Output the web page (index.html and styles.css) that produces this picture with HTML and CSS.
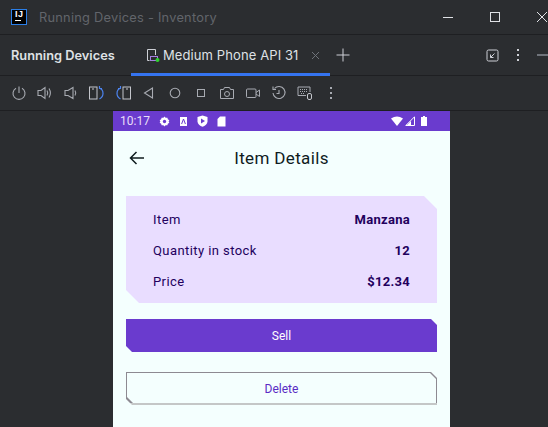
FILE: index.html
```html
<!DOCTYPE html>
<html lang="en">
<head>
    <meta charset="UTF-8">
    <meta name="viewport" content="width=device-width, initial-scale=1.0">
    <title>Running Devices - Inventory</title>
    <link rel="stylesheet" href="styles.css">
</head>
<body>
    <header class="titlebar">
        <div class="logo"><span class="logo-text">IJ</span><span class="logo-bar"></span></div>
        <span class="window-title">Running Devices - Inventory</span>
        <div class="window-buttons">
            <svg width="12" height="12" viewBox="0 0 12 12"><path d="M1 6.5H11" stroke="#dfe1e5" fill="none"/></svg>
            <svg width="12" height="12" viewBox="0 0 12 12"><rect x="1.5" y="1.5" width="9" height="9" stroke="#dfe1e5" fill="none"/></svg>
            <svg width="12" height="12" viewBox="0 0 12 12"><path d="M1 1L11 11M11 1L1 11" stroke="#dfe1e5" fill="none"/></svg>
        </div>
    </header>

    <nav class="tabbar">
        <span class="tool-name">Running Devices</span>
        <div class="tab">
            <svg width="14" height="14" viewBox="0 0 14 14">
                <path d="M9.5 7V1.5H1.5V12.5H3.5" stroke="#ced0d6" fill="none"/>
                <path d="M4 1.5H5.5" stroke="#ced0d6" fill="none"/>
                <rect x="4.5" y="8.5" width="7" height="4" stroke="#a57fe0" fill="none"/>
                <circle cx="11.5" cy="12" r="2" fill="#2fd02f"/>
            </svg>
            <span class="tab-label">Medium Phone API 31</span>
            <svg class="tab-close" width="9" height="9" viewBox="0 0 9 9"><path d="M1 1L8 8M8 1L1 8" stroke="#6f737a" fill="none"/></svg>
        </div>
        <svg class="tab-add" width="14" height="14" viewBox="0 0 14 14"><path d="M7 0.5V13.5M0.5 7H13.5" stroke="#ced0d6" fill="none"/></svg>
        <div class="tab-actions">
            <svg width="13" height="13" viewBox="0 0 13 13"><rect x="1" y="1" width="11" height="11" rx="1.5" stroke="#ced0d6" fill="none"/><path d="M8.5 4.5L4.5 8.5M4.5 5.5V8.5H7.5" stroke="#ced0d6" fill="none"/></svg>
            <svg width="4" height="14" viewBox="0 0 4 14"><path d="M1 1h2v2H1zM1 6h2v2H1zM1 11h2v2H1z" fill="#ced0d6"/></svg>
            <span class="minimize"></span>
        </div>
    </nav>

    <div class="toolbar">
        <svg width="16" height="16" viewBox="0 0 16 16"><path d="M5 3.2A6 6 0 1 0 11 3.2M8 1.5V8" stroke="#a8abb2" stroke-width="1.1" fill="none"/></svg>
        <svg width="16" height="16" viewBox="0 0 16 16"><path d="M1 5.5H4L8 2.5V13.5L4 10.5H1Z M10 5.5Q11.5 8 10 10.5M12 3.5Q14.8 8 12 12.5" stroke="#a8abb2" stroke-width="1.1" fill="none"/></svg>
        <svg width="16" height="16" viewBox="0 0 16 16"><path d="M2 5.5H5L10 2.5V13.5L5 10.5H2Z M12 5.5Q13.5 8 12 10.5" stroke="#a8abb2" stroke-width="1.1" fill="none"/></svg>
        <svg width="16" height="16" viewBox="0 0 16 16"><rect x="0.5" y="2" width="7.5" height="12" stroke="#c4c6cc" fill="none"/><path d="M3 4H5" stroke="#c4c6cc" fill="none"/><path d="M10 3Q14 4 14 8.5Q14 12 10.5 14M10.5 1V3.5H13" stroke="#4c84f0" stroke-width="1.2" fill="none"/></svg>
        <svg width="16" height="16" viewBox="0 0 16 16"><rect x="8" y="2" width="7.5" height="12" stroke="#c4c6cc" fill="none"/><path d="M11 4H13" stroke="#c4c6cc" fill="none"/><path d="M6 3Q2 4 2 8.5Q2 12 5.5 14M5.5 1V3.5H3" stroke="#4c84f0" stroke-width="1.2" fill="none"/></svg>
        <svg width="16" height="16" viewBox="0 0 16 16"><path d="M11.5 3V13L3.5 8Z" stroke="#a8abb2" stroke-width="1.1" fill="none"/></svg>
        <svg width="16" height="16" viewBox="0 0 16 16"><circle cx="8" cy="8" r="4.8" stroke="#a8abb2" stroke-width="1.1" fill="none"/></svg>
        <svg width="16" height="16" viewBox="0 0 16 16"><rect x="4.5" y="4.5" width="7" height="7" stroke="#a8abb2" fill="none"/></svg>
        <svg width="16" height="16" viewBox="0 0 16 16"><path d="M1.5 4.5H4.5L5.5 2.5H10.5L11.5 4.5H14.5V13.5H1.5Z" stroke="#a8abb2" fill="none"/><circle cx="8" cy="9" r="2.5" stroke="#a8abb2" fill="none"/></svg>
        <svg width="16" height="16" viewBox="0 0 16 16"><rect x="1.5" y="4" width="9.5" height="8.5" rx="1" stroke="#a8abb2" fill="none"/><path d="M11 7.5L14.5 5V11.5L11 9" stroke="#a8abb2" fill="none"/></svg>
        <svg width="16" height="16" viewBox="0 0 16 16"><path d="M3.5 3.5A6 6 0 1 1 2 8M2 1.5V4.5H5M8 5V8.5H5.5" stroke="#a8abb2" stroke-width="1.1" fill="none"/></svg>
        <svg width="16" height="16" viewBox="0 0 16 16"><path d="M9 10.5H1V2H13V7" stroke="#a8abb2" fill="none"/><path d="M3 4.5h8M3 6.5h8M4 8.5h4" stroke="#a8abb2" stroke-dasharray="1 1" fill="none"/><rect x="10.5" y="8.5" width="4" height="6" rx="1.5" stroke="#c4c6cc" fill="none"/></svg>
        <svg width="16" height="16" viewBox="0 0 16 16"><path d="M7 2h2v2H7zM7 7h2v2H7zM7 12h2v2H7z" fill="#a8abb2"/></svg>
    </div>

    <main class="device-area">
        <div class="phone">
            <div class="statusbar">
                <span class="clock">10:17</span>
                <svg width="11" height="11" viewBox="0 0 12 12"><path d="M6 0.5L7.2 2L9.2 1.8L9.6 3.6L11.3 4.6L10.5 6L11.3 7.4L9.6 8.4L9.2 10.2L7.2 10L6 11.5L4.8 10L2.8 10.2L2.4 8.4L.7 7.4L1.5 6L.7 4.6L2.4 3.6L2.8 1.8L4.8 2Z" fill="#fff"/><circle cx="6" cy="6" r="1.8" fill="#6a3bce"/></svg>
                <svg width="9" height="11" viewBox="0 0 9 11"><path d="M1 1H8V10H1Z" fill="#fff"/><path d="M2.6 8L4.5 3L6.4 8" stroke="#6a3bce" fill="none"/></svg>
                <svg width="11" height="12" viewBox="0 0 11 12"><path d="M5.5 0.5L10.5 2V6.5C10.5 9 8 11 5.5 11.8C3 11 0.5 9 0.5 6.5V2Z" fill="#fff"/><path d="M4 3.5V8.5L8 6Z" fill="#6a3bce"/></svg>
                <svg width="9" height="11" viewBox="0 0 9 11"><path d="M3 0.5H8.5V10.5H0.5V3Z" fill="#fff"/></svg>
                <div class="status-right">
                    <svg width="12" height="10" viewBox="0 0 12 10"><path d="M0 2.5Q6 -1.5 12 2.5L6 10Z" fill="#fff"/></svg>
                    <svg width="10" height="10" viewBox="0 0 10 10"><path d="M9.5 0.8V9.5H0.8Z" stroke="#fff" fill="none"/><path d="M6 5V9.5H1.5Z" fill="#fff"/></svg>
                    <svg class="battery" width="6" height="10" viewBox="0 0 6 10"><path d="M2 0H4V1H6V10H0V1H2Z" fill="#fff"/></svg>
                </div>
            </div>
            <div class="appbar">
                <svg class="back" width="16" height="14" viewBox="0 0 16 14"><path d="M15 7H2M7.5 1L1.5 7L7.5 13" stroke="#0f1c1e" stroke-width="1.5" fill="none"/></svg>
                <h1 class="app-title">Item Details</h1>
            </div>
            <div class="content">
                <section class="details">
                    <div class="detail-row"><span>Item</span><strong>Manzana</strong></div>
                    <div class="detail-row"><span>Quantity in stock</span><strong>12</strong></div>
                    <div class="detail-row"><span>Price</span><strong>$12.34</strong></div>
                </section>
                <button type="button" class="btn-sell">Sell</button>
                <div class="btn-outline"><button type="button" class="btn-delete">Delete</button></div>
            </div>
        </div>
    </main>
</body>
</html>
```

FILE: styles.css
```css
html, body {
    height: 100%;
}

body {
    margin: 0;
    width: 548px;
    height: 427px;
    overflow: hidden;
    display: flex;
    flex-direction: column;
    background-color: #2b2d30;
    font-family: Inter, "Noto Sans", sans-serif;
}

svg {
    display: block;
    flex: none;
}

.titlebar {
    height: 34px;
    flex: none;
    display: flex;
    align-items: center;
    padding-left: 11px;
    border-bottom: 1px solid #1e1f22;
}

.logo {
    width: 14px;
    height: 14px;
    background: #000;
    border: 1px solid #2b7fe8;
    display: flex;
    flex-direction: column;
    overflow: hidden;
}

.logo-text {
    color: #fff;
    font-family: "Liberation Sans", sans-serif;
    font-size: 9px;
    font-weight: 700;
    line-height: 9px;
    padding-left: 3px;
    letter-spacing: 0.5px;
}

.logo-bar {
    width: 6px;
    height: 1px;
    margin: 1px 0 0 3px;
    background: #fff;
}

.window-title {
    margin-left: 12px;
    color: #62656b;
    font-size: 12.8px;
    letter-spacing: 0.25px;
}

.window-buttons {
    margin-left: auto;
    display: flex;
    gap: 35px;
}

.tabbar {
    height: 40px;
    flex: none;
    display: flex;
    align-items: center;
    padding-left: 11px;
    border-bottom: 1px solid #1e1f22;
}

.tool-name {
    width: 120px;
    color: #dfe1e5;
    font-size: 12.8px;
    font-weight: 600;
}

.tab {
    align-self: stretch;
    width: 199px;
    box-sizing: border-box;
    padding: 2px 0 0 15px;
    display: flex;
    align-items: center;
    border-bottom: 3px solid #3574f0;
    margin-bottom: -1px;
}

.tab-label {
    margin-left: 3px;
    color: #dfe1e5;
    font-size: 13px;
    letter-spacing: 0.1px;
    white-space: nowrap;
}

.tab-close {
    margin-left: 12px;
}

.tab-add {
    margin-left: 6px;
}

.tab-actions {
    margin-left: auto;
    display: flex;
    align-items: center;
    gap: 17px;
}

.minimize {
    width: 11px;
    height: 2px;
    background: #6f737a;
}

.toolbar {
    height: 34px;
    flex: none;
    display: flex;
    align-items: center;
    gap: 10px;
    padding-left: 11px;
    border-bottom: 1px solid #1e1f22;
}

.device-area {
    flex: 1;
    min-height: 0;
    padding-left: 113px;
}

.phone {
    width: 337px;
    height: 100%;
    background-color: #f4fffe;
    display: flex;
    flex-direction: column;
}

.statusbar {
    height: 20px;
    flex: none;
    display: flex;
    align-items: center;
    gap: 9px;
    padding: 0 23px 0 7px;
    background-color: #6a3bce;
}

.clock {
    color: #e8def8;
    font-family: Roboto, sans-serif;
    font-size: 12px;
}

.status-right {
    margin-left: auto;
    display: flex;
    align-items: center;
    gap: 2px;
}

.battery {
    margin-left: 4px;
}

.appbar {
    height: 54px;
    flex: none;
    display: flex;
    align-items: center;
    position: relative;
    justify-content: center;
}

.back {
    position: absolute;
    left: 16px;
    top: 20px;
}

.app-title {
    margin: 0;
    color: #0f1c1e;
    font-family: Roboto, sans-serif;
    font-size: 17px;
    font-weight: 400;
    letter-spacing: 0.35px;
}

.content {
    padding: 11px 13px 0;
}

.details {
    height: 107px;
    box-sizing: border-box;
    padding: 8px 27px 6px;
    display: flex;
    flex-direction: column;
    background-color: #e9ddff;
    clip-path: polygon(0 0, calc(100% - 13px) 0, 100% 13px, 100% 100%, 13px 100%, 0 calc(100% - 13px));
}

.detail-row {
    height: 31px;
    display: flex;
    align-items: center;
    justify-content: space-between;
    color: #22005d;
    font-family: Roboto, sans-serif;
    font-size: 13px;
    letter-spacing: 0.42px;
}

.detail-row strong {
    font-weight: 700;
    letter-spacing: 0.3px;
}

.btn-sell {
    display: block;
    width: 100%;
    height: 33px;
    margin-top: 16px;
    padding: 0;
    border: none;
    background-color: #6a3bce;
    color: #fff;
    font-family: Roboto, sans-serif;
    font-size: 12px;
    font-weight: 400;
    clip-path: polygon(0 0, calc(100% - 6px) 0, 100% 6px, 100% 100%, 6px 100%, 0 calc(100% - 6px));
}

.btn-outline {
    margin-top: 20px;
    height: 33px;
    padding: 1px 1px 2px;
    box-sizing: border-box;
    background: linear-gradient(#8d8a92 31px, #c4c7c7 31px);
    clip-path: polygon(0 0, calc(100% - 6px) 0, 100% 6px, 100% 100%, 6px 100%, 0 calc(100% - 6px));
}

.btn-delete {
    display: block;
    width: 100%;
    height: 100%;
    padding: 2px 0 0;
    border: none;
    background-color: #f4fffe;
    color: #5a2cc4;
    font-family: Roboto, sans-serif;
    font-size: 12px;
    font-weight: 400;
    clip-path: polygon(0 0, calc(100% - 6px) 0, 100% 6px, 100% 100%, 6px 100%, 0 calc(100% - 6px));
}
```
